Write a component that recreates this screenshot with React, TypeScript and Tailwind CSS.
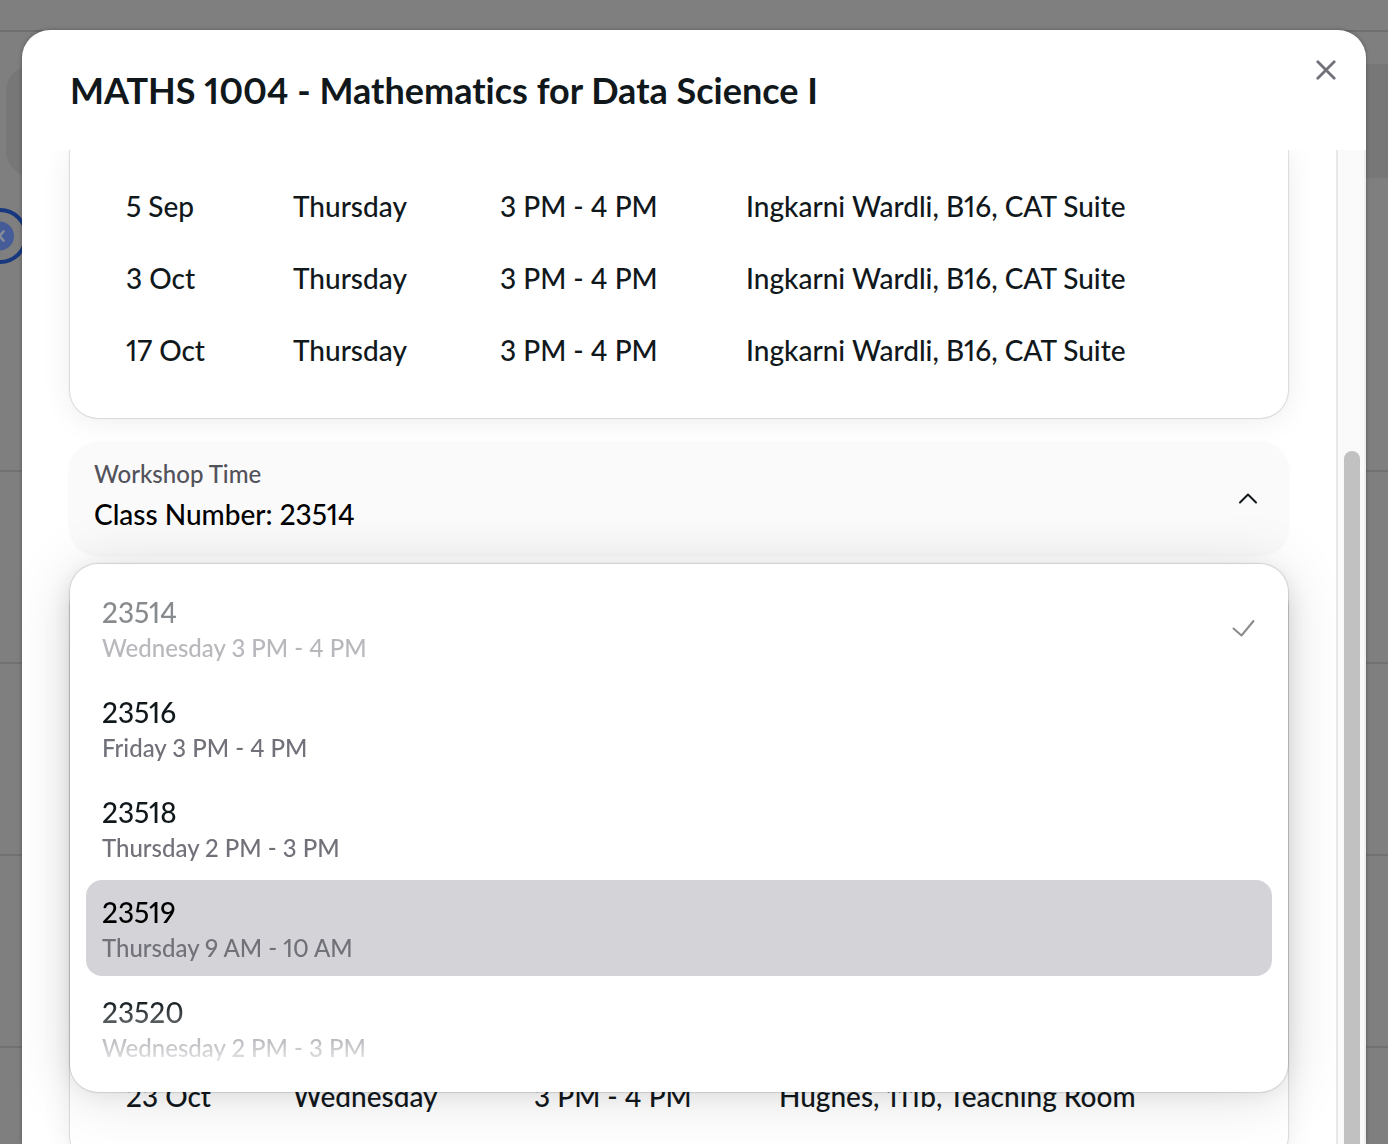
const place = "Ingkarni Wardli, B16, CAT Suite";

const firstMeetings = [
  ["5 Sep", "Thursday", "3 PM - 4 PM", place],
  ["3 Oct", "Thursday", "3 PM - 4 PM", place],
  ["17 Oct", "Thursday", "3 PM - 4 PM", place],
];

const workshopMeetings = [["23 Oct", "Wednesday", "3 PM - 4 PM", "Hughes, 111b, Teaching Room"]];

const options = [
  { id: "23514", time: "Wednesday 3 PM - 4 PM", selected: true },
  { id: "23516", time: "Friday 3 PM - 4 PM" },
  { id: "23518", time: "Thursday 2 PM - 3 PM" },
  { id: "23519", time: "Thursday 9 AM - 10 AM", active: true },
  { id: "23520", time: "Wednesday 2 PM - 3 PM" },
];

function Meetings({ rows, columns, label }: { rows: string[][]; columns: string[]; label: string }) {
  return (
    <table aria-label={label} className="w-full table-fixed text-left text-[28px] leading-10 text-[#11181c]">
      <colgroup>
        {columns.map((c, i) => (
          <col key={i} className={c} />
        ))}
      </colgroup>
      <tbody>
        {rows.map((row) => (
          <tr key={row[0]}>
            {row.map((cell, i) => (
              <td key={i} className="px-6 py-4 whitespace-nowrap">
                {cell}
              </td>
            ))}
          </tr>
        ))}
      </tbody>
    </table>
  );
}

function Backdrop() {
  return (
    <div className="h-full bg-[#7f7f7f]" aria-hidden="true">
      <div className="h-8 border-b-2 border-[#6e6e6e]" />
      <div className="mt-8 ml-1.5 h-[114px] rounded-l-[28px] bg-[#777777]" />
      <div className="mt-[30px] -ml-7 flex size-14 items-center justify-center rounded-full border-4 border-[#17387f]">
        <svg viewBox="0 0 30 30" className="size-[30px]">
          <circle cx="14.5" cy="15" r="14.5" fill="#455c99" />
          <path d="M10.5 10.5l8 9M18.5 10.5l-8 9" stroke="#868b98" strokeWidth="2.6" strokeLinecap="round" />
        </svg>
      </div>
      <div className="mt-4">
        {[0, 1, 2, 3, 4].map((n) => (
          <div key={n} className="h-48 border-b-2 border-[#717171]" />
        ))}
      </div>
    </div>
  );
}

function WorkshopSelect() {
  return (
    <div className="relative z-10 mt-6">
      <button
        type="button"
        aria-haspopup="listbox"
        aria-expanded="true"
        className="flex h-28 w-full items-center justify-between rounded-[28px] bg-[#fafafa] pr-[30px] pl-6 text-left shadow-[0_1px_4px_rgba(0,0,0,0.05)]"
      >
        <span className="flex flex-col pb-2">
          <span className="text-2xl leading-10 text-[#52525b]">Workshop Time</span>
          <span className="text-[28px] leading-10 text-black">Class Number: 23514</span>
        </span>
        <svg viewBox="0 0 20 12" className="h-3 w-5" fill="none" stroke="#11181c" strokeWidth="2" strokeLinecap="round" strokeLinejoin="round">
          <path d="M2 10.5l8-8 8 8" />
        </svg>
      </button>
      <div
        role="listbox"
        aria-label="Workshop Time"
        className="absolute inset-x-0 top-[122px] rounded-[28px] bg-white p-4 shadow-[0_0_1px_1px_rgba(0,0,0,0.12),0_4px_20px_rgba(0,0,0,0.05),0_4px_60px_rgba(0,0,0,0.13)]"
      >
        <div className="flex flex-col gap-1 mask-[linear-gradient(to_bottom,black_calc(100%-76px),transparent)]">
          {options.map((o) => (
            <button
              key={o.id}
              type="button"
              role="option"
              aria-selected={!!o.selected}
              className={`flex h-24 items-center justify-between rounded-2xl px-4 text-left ${o.active ? "bg-[#d4d4d8]" : ""} ${o.selected ? "opacity-50" : ""}`}
            >
              <span className="flex flex-col">
                <span className={`text-[28px] leading-10 ${o.active ? "text-black" : "text-[#11181c]"}`}>{o.id}</span>
                <span className="text-2xl leading-8 text-[#71717a]">{o.time}</span>
              </span>
              {o.selected && (
                <svg viewBox="0 0 24 18" className="h-[18px] w-6" fill="none" stroke="#11181c" strokeWidth="2" strokeLinecap="round" strokeLinejoin="round">
                  <path d="M1.5 9.5l8 7L21.5 2" />
                </svg>
              )}
            </button>
          ))}
        </div>
      </div>
    </div>
  );
}

export default function App() {
  return (
    <div className="relative h-screen overflow-hidden font-['Lato','Liberation_Sans',sans-serif] font-medium proportional-nums [font-variant-ligatures:none]">
      <Backdrop />
      <section
        role="dialog"
        aria-labelledby="course-title"
        className="absolute inset-x-[22px] top-[30px] bottom-0 flex flex-col overflow-hidden rounded-t-[28px] bg-white shadow-[0_0_4px_rgba(0,0,0,0.3)]"
      >
        <header className="flex h-[120px] shrink-0 items-start justify-between pr-6 pl-12">
          <h1 id="course-title" className="pt-9 text-4xl leading-[48px] font-bold text-[#11181c]">
            MATHS 1004 - Mathematics for Data Science I
          </h1>
          <button type="button" aria-label="Close" className="mt-6 flex size-8 items-center justify-center">
            <svg viewBox="0 0 20 20" className="size-5" fill="none" stroke="#71717a" strokeWidth="2.8" strokeLinecap="round">
              <path d="M1.8 1.8l16.4 16.4M18.2 1.8L1.8 18.2" />
            </svg>
          </button>
        </header>
        <div className="flex min-h-0 flex-1">
          <div className="min-w-0 flex-1 overflow-hidden pr-12 pl-12">
            <div className="rounded-b-[28px] bg-white px-8 pt-5 pb-8 shadow-[0_0_1px_1px_rgba(0,0,0,0.12),0_2px_30px_rgba(0,0,0,0.08)]">
              <Meetings label="Class times" rows={firstMeetings} columns={["w-[167px]", "w-[207px]", "w-[246px]", ""]} />
            </div>
            <WorkshopSelect />
            <div className="mt-6 flex h-[586px] items-end rounded-[28px] bg-white px-8 pb-8 shadow-[0_0_1px_1px_rgba(0,0,0,0.12),0_2px_30px_rgba(0,0,0,0.08)]">
              <Meetings label="Workshop times" rows={workshopMeetings} columns={["w-[167px]", "w-[241px]", "w-[245px]", ""]} />
            </div>
          </div>
          <div className="flex w-[30px] shrink-0 flex-col border-r-2 border-l-2 border-[#e8e8e8] border-r-[#efefef] bg-[#fafafa] pt-[301px] pr-1 pl-1.5">
            <div className="flex-1 rounded-t-full bg-[#c1c1c1]" />
          </div>
        </div>
      </section>
    </div>
  );
}
